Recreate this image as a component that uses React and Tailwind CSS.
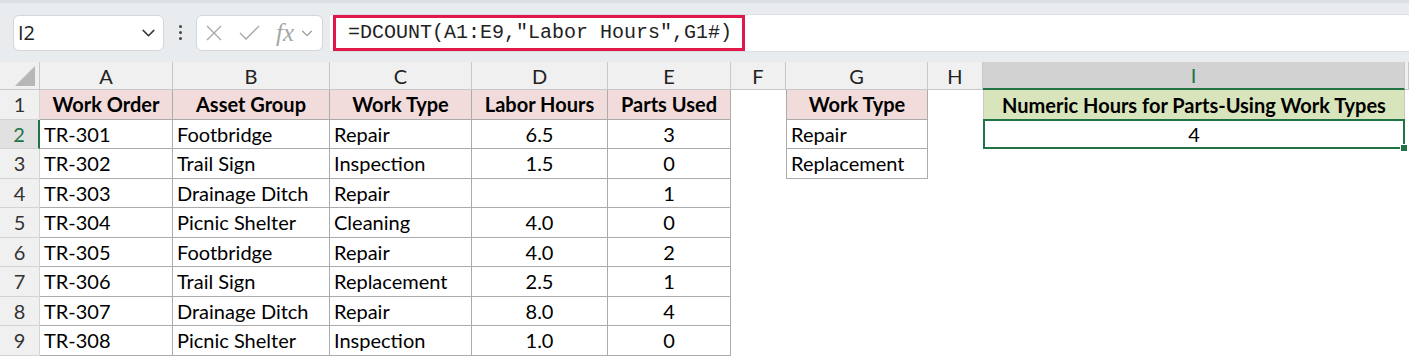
import React from 'react'

const COLS = ['A', 'B', 'C', 'D', 'E', 'F', 'G', 'H', 'I', '']

const ROWS = [
  ['TR-301', 'Footbridge', 'Repair', '6.5', '3'],
  ['TR-302', 'Trail Sign', 'Inspection', '1.5', '0'],
  ['TR-303', 'Drainage Ditch', 'Repair', '', '1'],
  ['TR-304', 'Picnic Shelter', 'Cleaning', '4.0', '0'],
  ['TR-305', 'Footbridge', 'Repair', '4.0', '2'],
  ['TR-306', 'Trail Sign', 'Replacement', '2.5', '1'],
  ['TR-307', 'Drainage Ditch', 'Repair', '8.0', '4'],
  ['TR-308', 'Picnic Shelter', 'Inspection', '1.0', '0'],
]

const HEADERS = ['Work Order', 'Asset Group', 'Work Type', 'Labor Hours', 'Parts Used']
const CRITERIA = ['Repair', 'Replacement']

const cellFont = { fontFamily: 'Lato, "Liberation Sans", sans-serif' }

function Chevron({ className }) {
  return (
    <svg className={className} viewBox="0 0 16 16" fill="none" stroke="currentColor" strokeWidth={1.4}>
      <path strokeLinecap="round" strokeLinejoin="round" d="M3 6l5 5 5-5" />
    </svg>
  )
}

function Toolbar() {
  return (
    <div className="flex h-[62px] items-center bg-[#e9ecef] border-t-[3px] border-[#dcdfe3]">
      {/* name box */}
      <div className="ml-[13px] flex h-[36px] w-[151px] items-center justify-between rounded-[6px] border border-[#d3d6da] bg-white pl-[4px] pr-[6px]">
        <span className="text-[20px] text-[#222]" style={{ fontFamily: '"Open Sans", sans-serif' }}>I2</span>
        <Chevron className="h-[17px] w-[17px] text-[#333]" />
      </div>
      <div className="flex w-[32px] flex-col items-center justify-center gap-[3px]">
        <span className="h-[3px] w-[3px] rounded-full bg-[#444]" />
        <span className="h-[3px] w-[3px] rounded-full bg-[#444]" />
        <span className="h-[3px] w-[3px] rounded-full bg-[#444]" />
      </div>
      {/* function buttons */}
      <div className="flex h-[36px] w-[127px] items-center rounded-[6px] border border-[#d3d6da] bg-white pl-[8px] text-[#a6a6a6]">
        <svg className="h-[18px] w-[18px]" viewBox="0 0 18 18" fill="none" stroke="currentColor" strokeWidth={1.3}>
          <path d="M2 2l14 14M16 2L2 16" />
        </svg>
        <svg className="ml-[16px] h-[18px] w-[21px]" viewBox="0 0 21 18" fill="none" stroke="currentColor" strokeWidth={1.3}>
          <path d="M1 9l6 6L20 2" />
        </svg>
        <span className="ml-[16px] text-[25px] italic leading-none" style={{ fontFamily: '"Liberation Serif", serif' }}>fx</span>
        <Chevron className="ml-[6px] h-[14px] w-[14px] text-[#999]" />
      </div>
      {/* formula bar */}
      <div className="ml-[7px] flex h-[38px] flex-1 items-stretch border-y border-[#dadde1] bg-white">
        <div className="ml-[3px] flex w-[412px] items-center border-[3px] border-[#e0194a] pl-[12px]">
          <span className="text-[20px] text-[#222]" style={{ fontFamily: '"Liberation Mono", monospace' }}>
            =DCOUNT(A1:E9,"Labor Hours",G1#)
          </span>
        </div>
      </div>
    </div>
  )
}

function Cell({ children, className = '' }) {
  return (
    <div className={`flex items-center overflow-hidden whitespace-nowrap text-[20px] text-black ${className}`} style={cellFont}>
      {children}
    </div>
  )
}

export default function App() {
  const line = 'border-[#ababab]'
  return (
    <div className="h-[357px] w-[1409px] overflow-hidden bg-white">
      <Toolbar />
      <div className="grid grid-cols-[40px_133px_157px_142px_136px_123px_55px_142px_55px_422px_1fr] grid-rows-[28px_repeat(9,29.5px)]">
        {/* corner */}
        <div className="flex items-end justify-end border-r border-b border-[#c8c8c8] bg-[#f0f0f0] pb-[3px] pr-[4px]">
          <div className="h-0 w-0 border-b-[20px] border-l-[20px] border-b-[#b7b7b7] border-l-transparent" />
        </div>
        {COLS.map((c, i) =>
          c === 'I' ? (
            <Cell key={i} className="justify-center border-r border-b-2 border-r-[#c8c8c8] border-b-[#217346] bg-[#d2d2d2]">
              <span className="text-[#217346]">I</span>
            </Cell>
          ) : (
            <Cell key={i} className="justify-center border-r border-b border-[#c8c8c8] bg-[#f0f0f0]">
              <span className="text-[#222]">{c}</span>
            </Cell>
          )
        )}

        {/* row 1 */}
        <Cell className="justify-center border-r border-b border-[#d4d4d4] bg-[#f0f0f0]">
          <span className="text-[#333]">1</span>
        </Cell>
        {HEADERS.map((h) => (
          <Cell key={h} className={`justify-center border-r border-b ${line} bg-[#f2dcdb] font-bold`}>{h}</Cell>
        ))}
        <Cell />
        <Cell className={`justify-center border-x border-b ${line} bg-[#f2dcdb] font-bold`}>Work Type</Cell>
        <Cell />
        <Cell className="justify-center border-x border-[#c8c8c8] bg-[#d8e4bc] font-bold">Numeric Hours for Parts-Using Work Types</Cell>
        <Cell />

        {ROWS.map((r, ri) => {
          const n = ri + 2
          const selected = n === 2
          return (
            <React.Fragment key={n}>
              {selected ? (
                <Cell className="justify-center border-r-2 border-b border-r-[#217346] border-b-[#d4d4d4] bg-[#e1e1e1]">
                  <span className="text-[#217346]">{n}</span>
                </Cell>
              ) : (
                <Cell className="justify-center border-r border-b border-[#d4d4d4] bg-[#f0f0f0]">
                  <span className="text-[#333]">{n}</span>
                </Cell>
              )}
              {r.map((v, ci) => (
                <Cell key={ci} className={`border-r border-b ${line} ${ci < 3 ? 'pl-[4px]' : 'justify-center'}`}>{v}</Cell>
              ))}
              <Cell />
              {CRITERIA[ri] ? (
                <Cell className={`border-x border-b ${line} pl-[4px]`}>{CRITERIA[ri]}</Cell>
              ) : (
                <Cell />
              )}
              <Cell />
              {selected ? (
                <div className="relative -mt-[1px] flex items-center justify-center border-2 border-[#217346] text-[20px]" style={cellFont}>
                  4
                  <span className="absolute -bottom-[5px] -right-[5px] h-[8px] w-[8px] border border-white bg-[#217346]" />
                </div>
              ) : (
                <Cell />
              )}
              <Cell />
            </React.Fragment>
          )
        })}
      </div>
    </div>
  )
}
